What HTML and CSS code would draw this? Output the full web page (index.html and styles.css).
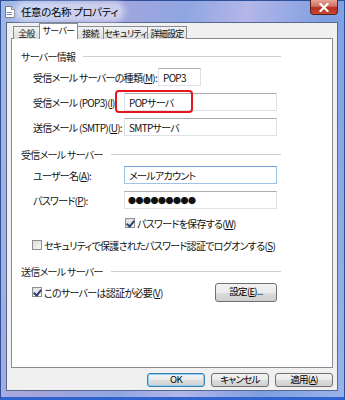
FILE: index.html
```html
<!DOCTYPE html>
<html lang="ja">

<head>
    <meta charset="UTF-8">
    <title>任意の名称 プロパティ</title>
    <link rel="stylesheet" href="styles.css">
</head>

<body>
    <div class="window">
        <div class="titlebar">
            <span class="app-icon">
                <svg width="10" height="12" viewBox="0 0 10 12">
                    <path d="M0.5 0.5h6l3 3v8h-9z" fill="#fff" stroke="#7a7a7a"/>
                    <path d="M6.5 0.5v3h3" fill="#ddd" stroke="#7a7a7a"/>
                    <rect x="2" y="6" width="5" height="1" fill="#6a8cc8"/>
                    <rect x="2" y="8" width="5" height="1" fill="#6a8cc8"/>
                </svg>
            </span>
            <span class="title">任意の名称 プロパティ</span>
            <span class="close">
                <svg width="10" height="9" viewBox="0 0 10 9">
                    <path d="M1.5 1l7 7M8.5 1l-7 7" stroke="#fff" stroke-width="2.2" stroke-linecap="square"/>
                </svg>
            </span>
        </div>

        <div class="client">
            <div class="tabs">
                <div class="tab tab-general">全般</div>
                <div class="tab tab-server active">サーバー</div>
                <div class="tab tab-conn">接続</div>
                <div class="tab tab-sec">セキュリティ</div>
                <div class="tab tab-adv">詳細設定</div>
            </div>

            <div class="panel">
                <!-- サーバー情報 -->
                <div class="group-title"><span>サーバー情報</span><i class="rule"></i></div>
                <div class="row">
                    <span class="label label-wide">受信メール サーバーの種類(<u>M</u>):</span>
                    <span class="field field-short">POP3</span>
                </div>
                <div class="row">
                    <span class="label">受信メール (POP3)(<u>I</u>):</span>
                    <span class="field">POPサーバ</span>
                    <span class="highlight"></span>
                </div>
                <div class="row">
                    <span class="label">送信メール (SMTP)(<u>U</u>):</span>
                    <span class="field">SMTPサーバ</span>
                </div>

                <!-- 受信メール サーバー -->
                <div class="group-title"><span>受信メール サーバー</span><i class="rule"></i></div>
                <div class="row">
                    <span class="label">ユーザー名(<u>A</u>):</span>
                    <span class="field field-focus">メールアカウント</span>
                </div>
                <div class="row">
                    <span class="label">パスワード(<u>P</u>):</span>
                    <span class="field field-pass">●●●●●●●●●</span>
                </div>
                <div class="check-row check-save">
                    <span class="checkbox checked"></span>
                    <span>パスワードを保存する(<u>W</u>)</span>
                </div>
                <div class="check-row check-spa">
                    <span class="checkbox"></span>
                    <span>セキュリティで保護されたパスワード認証でログオンする(<u>S</u>)</span>
                </div>

                <!-- 送信メール サーバー -->
                <div class="group-title"><span>送信メール サーバー</span><i class="rule"></i></div>
                <div class="row row-auth">
                    <span class="checkbox checked"></span>
                    <span>このサーバーは認証が必要(<u>V</u>)</span>
                    <span class="button button-settings">設定(<u>E</u>)...</span>
                </div>
            </div>

            <div class="footer">
                <span class="button default">OK</span>
                <span class="button">キャンセル</span>
                <span class="button">適用(<u>A</u>)</span>
            </div>
        </div>
    </div>
</body>

</html>
```

FILE: styles.css
```css
* {
    margin: 0;
    padding: 0;
    box-sizing: border-box;
}

body {
    width: 345px;
    height: 400px;
    overflow: hidden;
    font-family: "Noto Sans CJK JP", "Noto Sans", sans-serif;
    font-size: 10px;
    font-feature-settings: "palt";
    letter-spacing: -0.7px;
    color: #111;
}

u {
    text-decoration: underline;
    text-underline-offset: 1px;
}

/* ウィンドウ枠 */
.window {
    width: 345px;
    height: 400px;
    display: flex;
    flex-direction: column;
    padding: 0 6px 6px 5px;
    background: linear-gradient(100deg, #9fb8e6 0%, #a7a4dc 25%, #8fa6e2 45%, #b4b6e8 60%, #7d9ee0 80%, #9ab4ea 100%);
    border: 1px solid #2e4f9a;
    border-bottom: 3px solid #2f63cf;
}

.titlebar {
    height: 21px;
    display: flex;
    align-items: center;
    position: relative;
}

.app-icon {
    display: flex;
    margin: 1px 2px 0 -1px;
}

.title {
    font-size: 10.5px;
    letter-spacing: -0.4px;
    color: #000;
    padding: 0 4px;
    background: rgba(235, 240, 252, 0.55);
    border-radius: 8px;
    box-shadow: 0 0 6px 3px rgba(235, 240, 252, 0.55);
}

.close {
    position: absolute;
    right: 0;
    top: -1px;
    width: 28px;
    height: 15px;
    display: flex;
    align-items: center;
    justify-content: center;
    background: linear-gradient(#e8a598 0%, #d0705e 45%, #b52f1c 55%, #c84a33 100%);
    border: 1px solid #5a2018;
    border-top: 0;
    border-radius: 0 0 4px 4px;
}

.client {
    flex: 1;
    display: flex;
    flex-direction: column;
    background: #f0f0f0;
    border: 1px solid #56688c;
    padding: 1px 4px 0;
}

/* タブ */
.tabs {
    display: flex;
    align-items: flex-end;
    height: 15px;
    padding-left: 2px;
    margin-bottom: -1px;
    position: relative;
    z-index: 1;
}

.tab {
    height: 13px;
    display: flex;
    align-items: center;
    justify-content: center;
    border: 1px solid #898c95;
    border-bottom: 0;
    border-right: 0;
    background: linear-gradient(#f3f3f3, #dcdcdc);
    font-size: 9px;
    letter-spacing: -0.7px;
    white-space: nowrap;
    line-height: 1;
}

.tab-general { width: 26px; }
.tab-server { width: 39px; }
.tab-conn { width: 26px; }
.tab-sec { width: 44px; }
.tab-adv { width: 40px; border-right: 1px solid #898c95; }

.tab.active {
    height: 16px;
    background: #fff;
    border-right: 1px solid #898c95;
    margin-right: -1px;
    padding-bottom: 2px;
    position: relative;
    z-index: 2;
}

/* タブの中身 */
.panel {
    flex: 1;
    background: #fff;
    border: 1px solid #898c95;
    padding: 10px 0 0 9px;
}

.group-title {
    width: 260px;
    height: 14px;
    display: flex;
    align-items: center;
    margin-top: 11px;
    color: #1b1b1b;
}

.group-title:first-child {
    margin-top: 0;
}

.rule {
    flex: 1;
    height: 1px;
    margin-left: 8px;
    background: #c9ced6;
}

.row {
    height: 18px;
    display: flex;
    align-items: center;
    margin: 7px 0 0 12px;
    position: relative;
}

.group-title + .row {
    margin-top: 5px;
}

.label {
    width: 91px;
    flex-shrink: 0;
    white-space: nowrap;
}

.label-wide {
    width: 125px;
}

.field {
    width: 153px;
    height: 18px;
    display: flex;
    align-items: center;
    padding-left: 4px;
    background: #fff;
    border: 1px solid #dde2e8;
    border-top-color: #abadb3;
}

.field-short {
    width: 43px;
}

.field-focus {
    border-color: #9fc3e6;
    border-top-color: #6f9fcd;
}

.field-pass {
    font-size: 8px;
    letter-spacing: -0.5px;
    padding-left: 3px;
}

.highlight {
    position: absolute;
    left: 82px;
    top: -3px;
    width: 78px;
    height: 23px;
    border: 2px solid #e5161c;
    border-radius: 4px;
}

/* チェックボックス */
.check-row {
    height: 16px;
    display: flex;
    align-items: center;
    margin-top: 6px;
}

.check-save {
    margin-left: 104px;
}

.check-spa {
    margin-left: 11px;
}

.checkbox {
    width: 10px;
    height: 10px;
    margin-right: 2px;
    flex-shrink: 0;
    border: 1px solid #8e8f8f;
    background: linear-gradient(135deg, #dcdcdc, #f8f8f8);
    position: relative;
}

.checkbox.checked::after {
    content: "";
    position: absolute;
    left: 2px;
    top: 0;
    width: 3px;
    height: 6px;
    border: solid #2c3f73;
    border-width: 0 2px 2px 0;
    transform: rotate(40deg);
}

.row-auth {
    width: 245px;
    margin-left: 11px;
}

.button {
    height: 14px;
    width: 58px;
    display: inline-flex;
    align-items: center;
    justify-content: center;
    border: 1px solid #707070;
    border-radius: 3px;
    background: linear-gradient(#f2f2f2 0%, #ebebeb 50%, #dddddd 51%, #cfcfcf 100%);
    font-size: 9.5px;
    line-height: 1;
    color: #000;
}

.button-settings {
    margin-left: auto;
    width: 62px;
    height: 19px;
}

.default {
    border-color: #3c7fb1;
    box-shadow: inset 0 0 0 1px #8fd0f3;
}

.footer {
    height: 22px;
    display: flex;
    justify-content: flex-end;
    gap: 6px;
    padding: 5px 0 0;
}
```
